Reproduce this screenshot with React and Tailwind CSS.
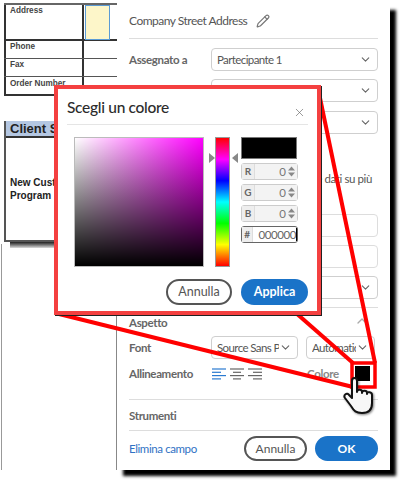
import { ChevronDown, ChevronUp, X, Pencil } from 'lucide-react';

const sans = "font-['Lato','Noto_Sans',sans-serif]";
const docText = "text-[8.2px] font-bold text-[#444] font-['Liberation_Sans',sans-serif]";
const label = 'text-[11.5px] font-bold tracking-[-0.35px] text-[#666]';

function Select({ label, className = 'w-full' }) {
  return (
    <div className={`flex items-center justify-between h-[23px] px-[5px] border border-[#cfcfcf] rounded-[4px] bg-white text-[11.5px] tracking-[-0.6px] text-[#555] ${className}`}>
      <span className="overflow-hidden whitespace-nowrap">{label}</span>
      <ChevronDown className="w-[13px] h-[13px] shrink-0 text-[#666]" />
    </div>
  );
}

function Row({ title, children, className = '' }) {
  return (
    <div className={`flex items-center ${className}`}>
      <div className={`w-[82px] ${label}`}>{title}</div>
      <div className="flex-1 flex gap-[9px]">{children}</div>
    </div>
  );
}

function AlignIcon({ lines, color }) {
  return (
    <svg width="14" height="12" viewBox="0 0 14 12" stroke={color} strokeWidth="1.2">
      {lines.map(([a, b], i) => <line key={i} x1={a} x2={b} y1={1 + i * 3.3} y2={1 + i * 3.3} />)}
    </svg>
  );
}

function Doc() {
  return (
    <div className="relative w-[117px] h-[481px] shrink-0">
      <div className="pt-[3px] pl-[4px]">
        <div className="w-[113px] border-t-2 border-[#666]">
          <div className="flex h-[36px] border-b-2 border-[#333]">
            <div className={`w-[80px] pl-[4px] border-l-2 border-r-2 border-[#333] ${docText}`}>Address</div>
            <div className="ml-[1px] w-[25px] h-[35px] bg-[#fdf6c9] border border-[#5b9bd5]" />
          </div>
          {['Phone', 'Fax'].map(t => (
            <div key={t} className="flex h-[18px] border-b border-[#555]">
              <div className={`w-[80px] pl-[4px] border-l-2 border-r-2 border-[#333] ${docText}`}>{t}</div>
            </div>
          ))}
          <div className={`w-[80px] h-[19px] pl-[4px] pt-[1px] border-2 border-t-0 border-[#333] whitespace-nowrap ${docText}`}>Order Number</div>
        </div>
      </div>
      <div className="ml-[4px] mt-[25px] h-[121px] border-l-2 border-b-2 border-[#555] font-['Liberation_Sans',sans-serif] font-bold text-[#222]">
        <div className="h-[17px] bg-[#b4c7e2] border-b-2 border-[#333] pl-[4px] text-[13px] leading-[15px] whitespace-nowrap">Client S</div>
        <div className="pl-[4px] pt-[38px] text-[10px] leading-[13px]">
          <div>New Cust</div>
          <div>Program</div>
        </div>
      </div>
      <div className="ml-[10px] h-[6px] w-[50px] bg-gradient-to-b from-[#222] to-[#ddd]" />
      <div className="absolute left-[1px] top-[244px] bottom-[11px] w-px bg-[#999]" />
      <div className="absolute left-[116px] top-[300px] bottom-[11px] w-px bg-[#888]" />
    </div>
  );
}

function Panel() {
  return (
    <div className={`relative mt-[4px] w-[273px] h-[466px] bg-white shadow-[6px_6px_3px_#000] px-[12px] ${sans}`}>
      <div className="absolute left-[-5px] top-[11px] w-[10px] h-[10px] rotate-45 bg-white" />
      <div className="relative flex items-center h-[35px] border-b border-[#ddd] text-[12px] tracking-[-0.5px] text-[#555]">
        <span>Company Street Address</span>
        <Pencil className="ml-[9px] w-[14px] h-[14px] text-[#777]" />
      </div>
      <Row title="Assegnato a" className="mt-[9px]"><Select label="Partecipante 1" /></Row>
      <Row className="mt-[8px]"><Select label="" /></Row>
      <Row className="mt-[9px]"><Select label="" /></Row>
      <div className="mt-[36px] text-right text-[11.5px] tracking-[-0.4px] text-[#555] pr-[6px]">e dati su più</div>
      <div className="ml-[82px] mt-[27px] h-[23px] border border-[#ddd] rounded-[4px]" />
      <div className="ml-[82px] mt-[8px] h-[23px] border border-[#ddd] rounded-[4px]" />
      <div className="ml-[82px] mt-[8px]"><Select label="" /></div>
      <div className="mt-[8px] border-t border-[#ddd]" />
      <div className={`mt-[6px] h-[16px] flex items-center justify-between ${label}`}>
        <span>Aspetto</span>
        <ChevronUp className="mr-[8px] w-[16px] h-[16px] text-[#aaa] -translate-y-[1px]" />
      </div>
      <Row title="Font" className="mt-[6px]">
        <Select label="Source Sans P" className="w-[87px]" />
        <Select label="Automatic" className="w-[69px] -ml-px" />
      </Row>
      <div className="mt-[2px] h-[25px] flex items-center">
        <div className={`w-[83px] ${label}`}>Allineamento</div>
        <div className="flex gap-[4px] w-[95px]">
          <AlignIcon color="#2a7ad0" lines={[[0, 14], [0, 9], [0, 14], [0, 9]]} />
          <AlignIcon color="#666" lines={[[0, 14], [3, 11], [0, 14], [3, 11]]} />
          <AlignIcon color="#666" lines={[[0, 14], [5, 14], [0, 14], [5, 14]]} />
        </div>
        <div className="w-[48px] text-[11.5px] font-bold tracking-[-0.35px] text-[#888]">Colore</div>
        <div className="w-[15px] h-[15px] bg-black" />
      </div>
      <div className="mt-[13px] border-t border-[#ddd]" />
      <div className={`mt-[7px] h-[16px] ${label}`}>Strumenti</div>
      <div className="mt-[7px] border-t border-[#ddd]" />
      <div className="mt-[5px] flex items-center justify-between">
        <span className="text-[11.5px] tracking-[-0.4px] text-[#2f72c4]">Elimina campo</span>
        <div className="flex gap-[8px] text-[12px]">
          <div className="w-[63px] h-[25px] flex items-center justify-center rounded-full border-2 border-[#555] text-[#555] bg-white">Annulla</div>
          <div className="w-[63px] h-[25px] flex items-center justify-center rounded-full bg-[#1a73c8] font-bold text-white">OK</div>
        </div>
      </div>
    </div>
  );
}

function Spinner() {
  return (
    <svg className="mx-[2px] shrink-0" width="7" height="11" viewBox="0 0 7 11" fill="#888">
      <path d="M3.5 0.5 7 4.5H0z" />
      <path d="M3.5 10.5 7 6.5H0z" />
    </svg>
  );
}

function ColorField({ label, value, active }) {
  return (
    <div className={`flex items-stretch h-[17px] w-[57px] border rounded-[3px] ${active ? 'border-[#666]' : 'border-[#ccc]'} text-[11.5px]`}>
      <div className="w-[13px] bg-[#eee] border-r border-[#ddd] flex items-center justify-center text-[10px] font-bold text-[#666]">{label}</div>
      {active ? (
        <div className="flex-1 flex items-center pl-[5px] tracking-[-0.4px] text-[#666]">{value}<span className="w-px h-[13px] bg-black" /></div>
      ) : (
        <div className="flex-1 bg-[#f3f3f3] flex items-center justify-end text-[#777]">
          {value}
          <Spinner />
        </div>
      )}
    </div>
  );
}

function ColorDialog() {
  return (
    <div className={`absolute left-[54px] top-[85px] w-[267px] h-[230px] bg-white border-4 border-[#f44040] shadow-[1px_1px_0_#222] px-[9px] ${sans}`}>
      <div className="relative h-[36px] pt-[3px] border-b border-[#e5e5e5] flex items-center text-[15.5px] tracking-[-0.3px] font-medium text-[#2c2c2c]">
        Scegli un colore
        <X strokeWidth={1.2} className="absolute right-[2px] top-[17px] w-[13px] h-[13px] text-[#666]" />
      </div>
      <div className="flex mt-[12px] ml-[7px]">
        <div className="relative w-[130px] h-[130px] border border-[#bbb] bg-[linear-gradient(to_top,#000,transparent),linear-gradient(to_right,#fff,#f0f)]" />
        <div className="relative ml-[11px] w-[15px] h-[130px] border border-[#999] bg-[linear-gradient(to_bottom,#f00,#f0f,#00f,#0ff,#0f0,#ff0,#f00)]">
          <div className="absolute left-[-7px] top-[15px] border-y-[5px] border-y-transparent border-l-[6px] border-l-[#888]" />
          <div className="absolute right-[-9px] top-[15px] border-y-[5px] border-y-transparent border-r-[6px] border-r-[#888]" />
        </div>
        <div className="ml-[11px] flex flex-col gap-[4px]">
          <div className="w-[56px] h-[22px] bg-black border border-[#777]" />
          <ColorField label="R" value="0" />
          <ColorField label="G" value="0" />
          <ColorField label="B" value="0" />
          <ColorField label="#" value="000000" active />
        </div>
      </div>
      <div className="flex justify-end gap-[9px] mt-[12px] text-[12.5px]">
        <div className="w-[66px] h-[26px] rounded-full border-2 border-[#555] flex items-center justify-center text-[#555]">Annulla</div>
        <div className="w-[67px] h-[26px] rounded-full bg-[#1a73c8] font-bold flex items-center justify-center text-white">Applica</div>
      </div>
    </div>
  );
}

function Callout() {
  return (
    <svg className="absolute inset-0" width="400" height="481" fill="none" stroke="#f00" strokeWidth="4">
      <line x1="320" y1="98" x2="375" y2="363" />
      <line x1="296" y1="313" x2="353" y2="363" />
      <line x1="55" y1="313" x2="353" y2="387" />
      <rect x="352" y="363" width="23" height="24" strokeWidth="3.5" />
    </svg>
  );
}

function Hand() {
  return (
    <svg className="absolute left-[343px] top-[376px] drop-shadow-[1px_1px_1px_rgba(0,0,0,0.5)]" width="32" height="40" viewBox="0 0 32 40">
      <path d="M9 5c0-4 5-4 5 0v11c0-3 5-3 5 0v1c0-3 5-3 5 0v1c0-3 5-2 5 1v8c0 6-3 10-10 10-6 0-8-2-11-7l-6-8c-2-3 2-6 4-3l3 3z" fill="#f7f7f7" stroke="#111" strokeWidth="2" strokeLinejoin="round" />
    </svg>
  );
}

export default function App() {
  return (
    <div className="relative w-[400px] h-[481px] overflow-hidden bg-white">
      <div className="flex">
        <Doc />
        <Panel />
      </div>
      <Callout />
      <ColorDialog />
      <Hand />
    </div>
  );
}
